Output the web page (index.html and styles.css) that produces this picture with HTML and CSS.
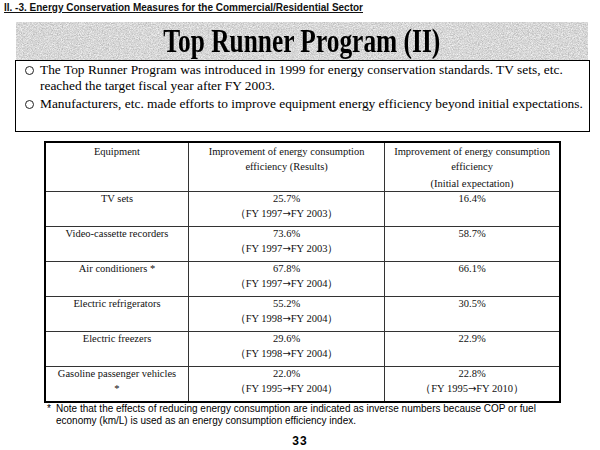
FILE: index.html
```html
<!DOCTYPE html>
<html>
<head>
<meta charset="utf-8">
<link rel="stylesheet" href="styles.css">
</head>
<body>
<div class="page">
  <div class="section-head">II. -3. Energy Conservation Measures for the Commercial/Residential Sector</div>
  <div class="banner">
    <svg class="texture" width="100%" height="100%" preserveAspectRatio="none">
      <filter id="grain" x="0" y="0" width="100%" height="100%">
        <feTurbulence type="fractalNoise" baseFrequency="0.8" numOctaves="3" seed="7"/>
        <feColorMatrix type="matrix" values="0 0 0 0 0.4  0 0 0 0 0.4  0 0 0 0 0.4  0 0 0 2.2 -0.85"/>
      </filter>
      <filter id="grain2" x="0" y="0" width="100%" height="100%">
        <feTurbulence type="fractalNoise" baseFrequency="1.1" numOctaves="2" seed="12"/>
        <feColorMatrix type="matrix" values="0 0 0 0 1  0 0 0 0 1  0 0 0 0 1  0 0 0 2.2 -0.9"/>
      </filter>
      <rect width="100%" height="100%" fill="#d6d6d6"/>
      <rect width="100%" height="100%" filter="url(#grain)" opacity="0.7"/>
      <rect width="100%" height="100%" filter="url(#grain2)" opacity="0.8"/>
    </svg>
    <h1 class="title">Top Runner Program (II)</h1>
  </div>
  <div class="summary">
    <div class="point"><span class="bullet"><span class="ring"></span></span><span class="ptext">The Top Runner Program was introduced in 1999 for energy conservation standards. TV sets, etc.<br>reached the target fiscal year after FY 2003.</span></div>
    <div class="point"><span class="bullet"><span class="ring"></span></span><span class="ptext">Manufacturers, etc. made efforts to improve equipment energy efficiency beyond initial expectations.</span></div>
  </div>
  <table class="data">
    <colgroup><col class="c1"><col class="c2"><col class="c3"></colgroup>
    <thead>
      <tr class="hrow">
        <th>Equipment</th>
        <th>Improvement of energy consumption<br>efficiency (Results)</th>
        <th>Improvement of energy consumption<br>efficiency<br><span class="sub">(Initial expectation)</span></th>
      </tr>
    </thead>
    <tbody>
      <tr><td><div class="cell">TV sets</div></td><td><div class="cell">25.7%<br>（FY 1997<span class="arr">→</span>FY 2003）</div></td><td><div class="cell">16.4%</div></td></tr>
      <tr><td><div class="cell">Video-cassette recorders</div></td><td><div class="cell">73.6%<br>（FY 1997<span class="arr">→</span>FY 2003）</div></td><td><div class="cell">58.7%</div></td></tr>
      <tr><td><div class="cell">Air conditioners *</div></td><td><div class="cell">67.8%<br>（FY 1997<span class="arr">→</span>FY 2004）</div></td><td><div class="cell">66.1%</div></td></tr>
      <tr><td><div class="cell">Electric refrigerators</div></td><td><div class="cell">55.2%<br>（FY 1998<span class="arr">→</span>FY 2004）</div></td><td><div class="cell">30.5%</div></td></tr>
      <tr><td><div class="cell">Electric freezers</div></td><td><div class="cell">29.6%<br>（FY 1998<span class="arr">→</span>FY 2004）</div></td><td><div class="cell">22.9%</div></td></tr>
      <tr><td><div class="cell">Gasoline passenger vehicles<br>*</div></td><td><div class="cell">22.0%<br>（FY 1995<span class="arr">→</span>FY 2004）</div></td><td><div class="cell">22.8%<br>（FY 1995<span class="arr">→</span>FY 2010）</div></td></tr>
    </tbody>
  </table>
  <div class="note"><span class="star">*</span><span class="ntext">Note that the effects of reducing energy consumption are indicated as inverse numbers because COP or fuel<br>economy (km/L) is used as an energy consumption efficiency index.</span></div>
  <div class="pageno">33</div>
</div>
</body>
</html>
```
FILE: styles.css
```css
html, body {
  margin: 0;
  padding: 0;
  background: #fff;
}
.page {
  width: 600px;
  height: 450px;
  overflow: hidden;
  color: #000;
  font-family: "Liberation Serif", "Times New Roman", serif;
}
.section-head {
  font-family: "Liberation Sans", Arial, sans-serif;
  font-weight: bold;
  font-size: 10px;
  line-height: 12px;
  text-decoration: underline;
  color: #111;
  padding: 2px 0 0 4px;
  height: 22px;
  box-sizing: border-box;
}
.banner {
  position: relative;
  margin-left: 16px;
  width: 572px;
  height: 38px;
  display: flex;
  justify-content: center;
  align-items: flex-start;
}
.texture {
  position: absolute;
  left: 0;
  top: 0;
}
.title {
  position: relative;
  margin: 0;
  font-family: "Liberation Serif", "Times New Roman", serif;
  font-weight: bold;
  font-size: 33px;
  line-height: 38px;
  transform: scaleX(0.77);
  white-space: nowrap;
}
.summary {
  margin-left: 15px;
  width: 575px;
  height: 72px;
  box-sizing: border-box;
  border: 1px solid #000;
  padding: 1px 4px 0 8px;
  font-size: 13.4px;
  line-height: 16px;
}
.point {
  display: flex;
  margin-bottom: 2px;
}
.bullet {
  flex: 0 0 16px;
}
.ring {
  display: block;
  width: 7px;
  height: 7px;
  border: 1px solid #222;
  border-radius: 50%;
  margin: 4px 0 0 1px;
}
.ptext {
  flex: 1;
  white-space: nowrap;
}
.data {
  margin: 9px 0 0 44px;
  width: 517px;
  border-collapse: collapse;
  border: 2px solid #000;
  font-size: 10.5px;
  line-height: 15px;
  color: #111;
}
.c1 { width: 144px; }
.c2 { width: 197px; }
.c3 { width: 176px; }
.data th, .data td {
  border: 1px solid #333;
  text-align: center;
  vertical-align: top;
  font-weight: normal;
  padding: 1px 2px 0;
}
.hrow th {
  height: 45px;
}
.data td {
  padding-top: 0;
  height: 34px;
}
.cell {
  margin-top: -1px;
}
.arr {
  font-family: "DejaVu Sans", sans-serif;
  font-size: 10px;
}
.sub {
  display: inline-block;
  margin-top: 2px;
}
.note {
  display: flex;
  margin: 0 0 0 47px;
  width: 540px;
  font-family: "Liberation Sans", Arial, sans-serif;
  font-size: 10px;
  line-height: 12px;
}
.star {
  flex: 0 0 9px;
}
.ntext {
  flex: 1;
  white-space: nowrap;
}
.pageno {
  text-align: center;
  font-family: "Liberation Sans", Arial, sans-serif;
  font-weight: bold;
  font-size: 12px;
  line-height: 14px;
  margin-top: 7px;
  letter-spacing: 1px;
}
```
